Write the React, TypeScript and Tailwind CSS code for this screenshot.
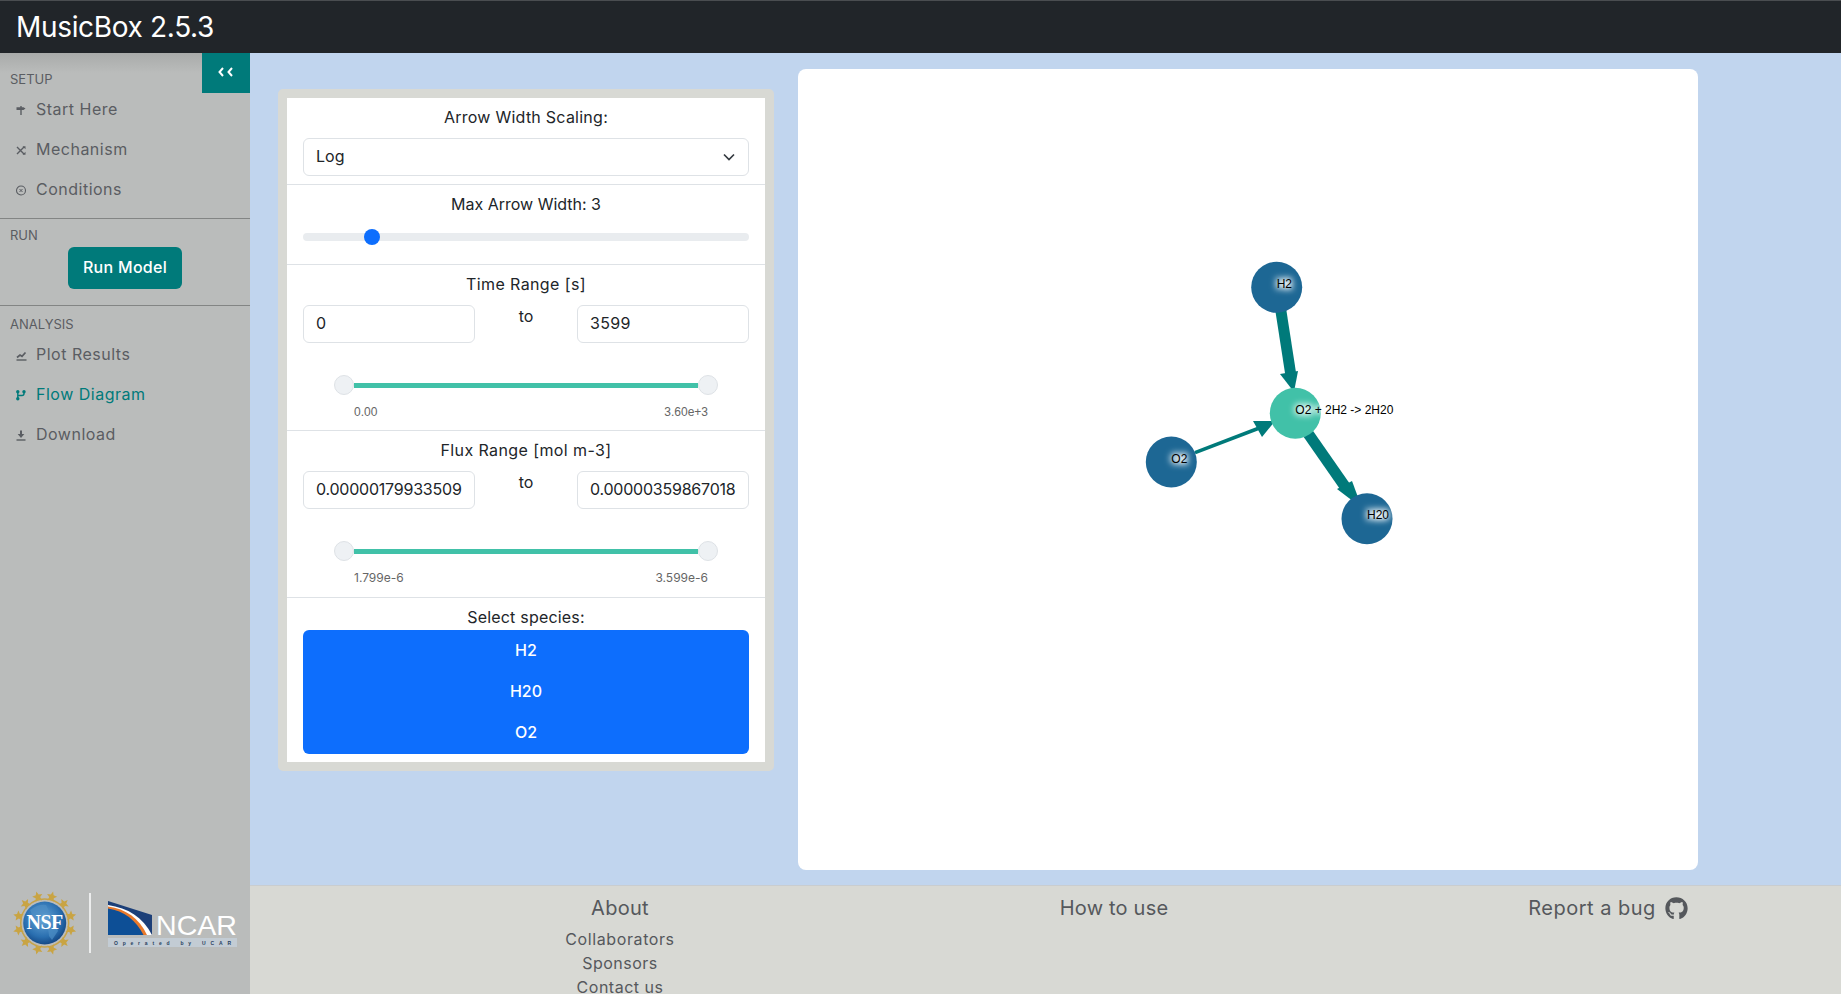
import { FaGithub } from 'react-icons/fa';

const setupItems = [
  { label: 'Start Here', icon: 'start' },
  { label: 'Mechanism', icon: 'mechanism' },
  { label: 'Conditions', icon: 'conditions' },
];

const analysisItems = [
  { label: 'Plot Results', icon: 'plot' },
  { label: 'Flow Diagram', icon: 'flow', active: true },
  { label: 'Download', icon: 'download' },
];

function NavIcon({ name }: { name: string }) {
  return (
    <svg width="12" height="12" viewBox="0 0 12 12" fill="none" stroke="currentColor" strokeWidth="1.4" className="mt-[2px] shrink-0">
      {name === 'start' && (
        <>
          <path d="M6 2v9" />
          <path d="M1.5 3.2H8.5L10.5 4.6L8.5 6H1.5Z" fill="currentColor" stroke="none" />
        </>
      )}
      {name === 'mechanism' && (
        <>
          <path d="M2 3l7 7M2 10l7-7" />
          <path d="M7.5 2.2h3v3zM7.5 10.8h3v-3z" fill="currentColor" stroke="none" />
        </>
      )}
      {name === 'conditions' && (
        <>
          <circle cx="6" cy="6.5" r="4.5" strokeWidth="1.1" />
          <path d="M4.5 5l3 3M4.5 8l3-3" strokeWidth="1" />
        </>
      )}
      {name === 'plot' && (
        <>
          <path d="M1.5 11h10" />
          <path d="M2 8.5L5 6l2 1.3L10.5 3.5" strokeWidth="1.7" />
        </>
      )}
      {name === 'flow' && (
        <>
          <circle cx="2.8" cy="2.8" r="1.7" fill="currentColor" stroke="none" />
          <circle cx="9" cy="2.8" r="1.7" fill="currentColor" stroke="none" />
          <circle cx="2.8" cy="9.8" r="1.7" fill="currentColor" stroke="none" />
          <path d="M2.8 3v6.5M9 3v1.5a2 2 0 0 1-2 2H2.8" />
        </>
      )}
      {name === 'download' && (
        <>
          <path d="M1.5 11h9" />
          <path d="M6 1.5v4" strokeWidth="2" />
          <path d="M2.7 5h6.6L6 9z" fill="currentColor" stroke="none" />
        </>
      )}
    </svg>
  );
}

function NavItem({ label, icon, active }: { label: string; icon: string; active?: boolean }) {
  return (
    <div className={`flex h-10 items-center gap-[9px] pl-[15px] text-base tracking-[0.5px] ${active ? 'text-[#007a7a]' : 'text-[#5a5d62]'}`}>
      <NavIcon name={icon} />
      <span>{label}</span>
    </div>
  );
}

const stars = Array.from({ length: 12 }, (_, i) => (i * Math.PI) / 6 + Math.PI / 12);

function starPoints(cx: number, cy: number, r: number, rot: number) {
  const pts: string[] = [];
  for (let i = 0; i < 10; i++) {
    const rad = i % 2 === 0 ? r : r * 0.45;
    const a = rot + (i * Math.PI) / 5;
    pts.push(`${cx + rad * Math.cos(a)},${cy + rad * Math.sin(a)}`);
  }
  return pts.join(' ');
}

function Logos() {
  return (
    <svg width="250" height="80" viewBox="0 885 250 80" className="block">
      <defs>
        <radialGradient id="globe" cx="45%" cy="40%" r="65%">
          <stop offset="0%" stopColor="#6aa8d8" />
          <stop offset="65%" stopColor="#2a6fb0" />
          <stop offset="100%" stopColor="#0f3f7c" />
        </radialGradient>
      </defs>
      <circle cx="44.7" cy="923" r="24" fill="none" stroke="#c7a349" strokeWidth="1.5" />
      {stars.map((a, i) => (
        <polygon
          key={i}
          points={starPoints(44.7 + 27 * Math.cos(a), 923 + 27 * Math.sin(a), 5.5, a)}
          fill="#c9a443"
        />
      ))}
      <circle cx="44.7" cy="923" r="21.5" fill="url(#globe)" />
      <path d="M30 910q8-6 16-5l3 6-7 4-2 7-6-3zM48 928l8-2 2 5-6 9-3-4z" fill="#4f8fc4" opacity="0.7" />
      <text x="44.7" y="929" textAnchor="middle" fill="#fff" fontFamily="'Liberation Serif', serif" fontWeight="700" fontSize="20" letterSpacing="-0.5">
        NSF
      </text>
      <rect x="89" y="893" width="2" height="60" fill="#eceded" />
      <path d="M108 901L152 915V935H108Z" fill="#1c3f78" />
      <path d="M108 905C128 908 143 917 152 935H108Z" fill="#fff" />
      <path d="M108 906.5C126 909 139 918 147 935H108Z" fill="#e8792b" />
      <path d="M108 908.5C124 911 136 920 143.5 935H108Z" fill="#0d4f96" />
      <text x="156" y="935" fill="#fff" fontFamily="'Liberation Sans', sans-serif" fontSize="27.5" textLength="81" lengthAdjust="spacingAndGlyphs">
        NCAR
      </text>
      <rect x="108" y="938" width="129" height="9" fill="#c3ccd4" />
      <text x="114" y="944.5" fill="#26405f" fontFamily="'Liberation Sans', sans-serif" fontWeight="700" fontSize="5" textLength="117">
        Operated by UCAR
      </text>
    </svg>
  );
}

function Sidebar() {
  return (
    <aside className="relative flex w-[250px] shrink-0 flex-col bg-[#babcbb] text-[#5a5d62]">
      <div className="absolute top-0 left-0 h-5 w-full bg-gradient-to-b from-[#a9abaa] to-transparent" />
      <button className="absolute top-0 right-0 flex h-10 w-12 items-center justify-center bg-[#007a7a]">
        <svg width="16" height="10" viewBox="0 0 16 10" fill="none" stroke="#fff" strokeWidth="2" className="mb-[3px]">
          <path d="M5 1L1.5 5 5 9M14 1l-3.5 4 3.5 4" />
        </svg>
      </button>
      <div className="relative px-[10px] pt-[17px] text-[13px] leading-[18px]">SETUP</div>
      <div className="relative pt-[1px]">
        {setupItems.map((item) => (
          <NavItem key={item.label} {...item} />
        ))}
      </div>
      <div className="mt-[9px] border-b border-[#838584]" />
      <div className="px-[10px] pt-[7px] text-[13px] leading-[18px]">RUN</div>
      <div className="flex justify-center pt-[3px]">
        <button className="h-[42px] w-[114px] rounded-md bg-[#007a7a] pb-[2px] text-base font-medium tracking-[0.3px] text-white">Run Model</button>
      </div>
      <div className="mt-[16px] border-b border-[#838584]" />
      <div className="px-[10px] pt-[9px] text-[13px] leading-[18px]">ANALYSIS</div>
      <div className="pt-[1px]">
        {analysisItems.map((item) => (
          <NavItem key={item.label} {...item} />
        ))}
      </div>
      <div className="mt-auto pb-[29px]">
        <Logos />
      </div>
    </aside>
  );
}

function TextBox({ value, tight }: { value: string; tight?: boolean }) {
  return (
    <input
      readOnly
      value={value}
      className={`h-[38px] w-[172px] rounded-md border border-[#dee2e6] bg-white px-[12px] pb-[2px] text-base text-[#212529] outline-none ${tight ? 'tracking-[-0.22px]' : 'tracking-[0.3px]'}`}
    />
  );
}

function RangeBlock({
  title,
  from,
  to,
  low,
  high,
  scaleClass,
  topClass,
  tight,
}: {
  title: string;
  from: string;
  to: string;
  low: string;
  high: string;
  scaleClass: string;
  topClass: string;
  tight?: boolean;
}) {
  return (
    <section className={`border-b border-[#dee2e6] px-4 pt-[7px] ${topClass}`}>
      <div className="text-center text-base leading-6 tracking-[0.4px]">{title}</div>
      <div className="mt-[9px] flex items-start justify-between">
        <TextBox value={from} tight={tight} />
        <span className="-mt-[1px] text-base leading-6">to</span>
        <TextBox value={to} tight={tight} />
      </div>
      <div className="mt-[32px] flex items-center px-[31px]">
        <div className="h-5 w-5 shrink-0 rounded-full border border-[#dee2e6] bg-[#eef1f4]" />
        <div className="h-[5px] flex-1 bg-[#41c1a8]" />
        <div className="h-5 w-5 shrink-0 rounded-full border border-[#dee2e6] bg-[#eef1f4]" />
      </div>
      <div className={`mt-[9px] flex justify-between pr-[41px] pl-[51px] text-xs leading-4 text-[#666] ${scaleClass}`}>
        <span>{low}</span>
        <span>{high}</span>
      </div>
    </section>
  );
}

function ControlPanel() {
  return (
    <div className="w-[496px] rounded-[5px] border-[9px] border-[#d8d9d4] bg-white text-[#212529]">
      <section className="h-[87px] border-b border-[#dee2e6] px-4 pt-[7px]">
        <div className="text-center text-base leading-6 tracking-[0.25px]">Arrow Width Scaling:</div>
        <div className="mt-[9px] flex h-[38px] items-center justify-between rounded-md border border-[#dee2e6] px-[12px]">
          <span className="pb-[2px] text-base">Log</span>
          <svg width="12" height="8" viewBox="0 0 12 8" fill="none" stroke="#343a40" strokeWidth="1.7" className="mr-[1px]">
            <path d="M1 1.5l5 5 5-5" />
          </svg>
        </div>
      </section>
      <section className="h-[80px] border-b border-[#dee2e6] px-4 pt-[7px]">
        <div className="text-center text-base leading-6">Max Arrow Width: 3</div>
        <div className="relative mt-[17px] h-2 rounded-full bg-[#e9ecef]">
          <div className="absolute top-[-4px] left-[61px] h-4 w-4 rounded-full bg-[#0d6efd]" />
        </div>
      </section>
      <RangeBlock
        title="Time Range [s]"
        from="0"
        to="3599"
        low="0.00"
        high="3.60e+3"
        scaleClass="[font-family:'Liberation_Sans',sans-serif]"
        topClass="h-[166px]"
      />
      <RangeBlock
        title="Flux Range [mol m-3]"
        from="0.00000179933509"
        to="0.00000359867018"
        low="1.799e-6"
        high="3.599e-6"
        scaleClass=""
        topClass="h-[167px]"
        tight
      />
      <section className="px-4 pt-[7px] pb-2">
        <div className="text-center text-base leading-6 tracking-[0.2px]">Select species:</div>
        <div className="mt-[1px] flex flex-col rounded-md bg-[#0d6efd] text-center text-base font-medium text-white">
          {['H2', 'H20', 'O2'].map((s) => (
            <div key={s} className="flex h-[41.3px] items-center justify-center pb-[2px]">
              {s}
            </div>
          ))}
        </div>
      </section>
    </div>
  );
}

const nodes = [
  { label: 'H2', x: 1276.7, y: 287.3, fill: '#1d6794' },
  { label: 'O2', x: 1171.3, y: 462, fill: '#1d6794' },
  { label: 'H20', x: 1367, y: 518.7, fill: '#1d6794' },
  { label: 'O2 + 2H2 -> 2H20', x: 1295.3, y: 413.3, fill: '#41c1a8' },
];

function FlowGraph() {
  return (
    <svg viewBox="798 69 900 801" className="block h-full w-full">
      <defs>
        <filter id="halo" x="-50%" y="-100%" width="200%" height="300%">
          <feGaussianBlur stdDeviation="3" />
        </filter>
      </defs>
      <g stroke="#007a7a" fill="#007a7a">
        <line x1="1280" y1="305" x2="1291" y2="376" strokeWidth="11" />
        <polygon points="1280,374 1298,371 1294,392" stroke="none" />
        <line x1="1195" y1="452.7" x2="1258" y2="428.5" strokeWidth="3.5" />
        <polygon points="1253,421 1262,437 1275,421" stroke="none" />
        <line x1="1307" y1="432" x2="1346" y2="488" strokeWidth="11" />
        <polygon points="1337,489 1352,481 1362,508" stroke="none" />
      </g>
      {nodes.map((n) => (
        <circle key={n.label} cx={n.x} cy={n.y} r="25.5" fill={n.fill} />
      ))}
      {nodes.map((n) => (
        <g key={n.label} fontFamily="'Liberation Sans', sans-serif" fontSize="12">
          <clipPath id={`clip-${n.x}`}>
            <circle cx={n.x} cy={n.y} r="25.5" />
          </clipPath>
          <g clipPath={`url(#clip-${n.x})`}>
            <text x={n.x} y={n.y + 0.5} fill="#fff" stroke="#fff" strokeWidth="2.5" filter="url(#halo)">
              {n.label}
            </text>
          </g>
          <text x={n.x} y={n.y + 0.5} fill="#000">
            {n.label}
          </text>
        </g>
      ))}
    </svg>
  );
}

function Footer() {
  return (
    <footer className="h-[109px] overflow-hidden border-t border-[#c9cdd0] bg-[#d8d9d4] text-[#55585c]">
      <div className="ml-[123px] grid w-[1482px] grid-cols-3 pt-[7px] text-center">
        <div>
          <div className="text-xl leading-[30px] tracking-[0.3px]">About</div>
          <div className="mt-[4px] text-base leading-6 tracking-[0.6px]">Collaborators</div>
          <div className="text-base leading-6 tracking-[0.5px]">Sponsors</div>
          <div className="text-base leading-6 tracking-[0.5px]">Contact us</div>
        </div>
        <div className="text-xl leading-[30px] tracking-[0.2px]">How to use</div>
        <div className="flex items-center justify-center gap-[9px] self-start text-xl leading-[30px] tracking-[0.5px]">
          <span>Report a bug</span>
          <FaGithub className="h-[23px] w-[23px]" />
        </div>
      </div>
    </footer>
  );
}

export default function App() {
  return (
    <div className="flex h-screen flex-col overflow-hidden bg-[#c1d5ee] [font-family:Inter,'Noto_Sans',sans-serif]">
      <header className="flex h-[53px] shrink-0 items-center border-t border-[#4a4d50] bg-[#212529] pl-4 text-[28px] tracking-[-0.33px] text-white">MusicBox 2.5.3</header>
      <div className="flex min-h-0 flex-1">
        <Sidebar />
        <div className="flex min-w-0 flex-1 flex-col">
          <main className="flex h-[832px] shrink-0 items-start pl-[28px]">
            <div className="mt-[36px]">
              <ControlPanel />
            </div>
            <div className="mt-[16px] ml-[24px] h-[801px] w-[900px] overflow-hidden rounded-lg bg-white">
              <FlowGraph />
            </div>
          </main>
          <Footer />
        </div>
      </div>
    </div>
  );
}
